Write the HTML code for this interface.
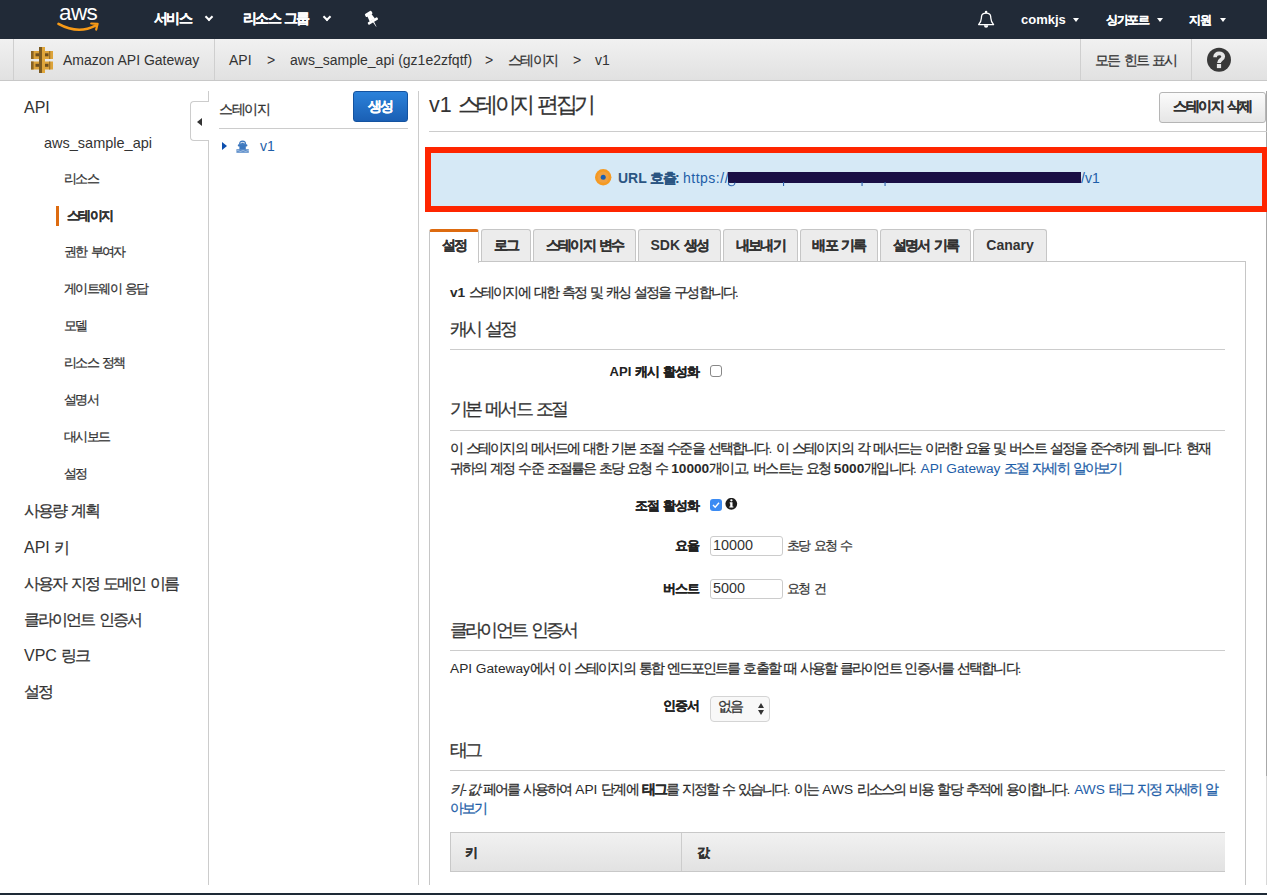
<!DOCTYPE html>
<html><head><meta charset="utf-8">
<style>
*{box-sizing:border-box;margin:0;padding:0}
html,body{width:1267px;height:895px;overflow:hidden;background:#fff;font-family:"Liberation Sans",sans-serif;color:#333}
.abs{position:absolute;white-space:nowrap}
#nav{position:absolute;left:0;top:0;width:1267px;height:39px;background:#212a37}
.tri{position:absolute;top:18px;width:0;height:0;border-left:3.5px solid transparent;border-right:3.5px solid transparent;border-top:4px solid #fff}
#nav .t{position:absolute;color:#fff;font-weight:bold;font-size:14px;top:10px}
.chev{position:absolute;width:6px;height:6px;border-right:2px solid #fff;border-bottom:2px solid #fff;transform:rotate(45deg)}
#crumb{position:absolute;left:0;top:39px;width:1267px;height:42px;background:linear-gradient(#f1f1f1,#e1e1e1);border-bottom:1px solid #c8c8c8}
#crumb .t{position:absolute;font-size:14px;color:#333;top:13px}
.vsep{position:absolute;top:0;width:1px;height:41px;background:#cfcfcf}
#side .t{position:absolute;color:#333;white-space:nowrap}
.lvl0{font-size:16px;left:24px}
.lvl1{font-size:14.5px;left:44px}
.lvl2{font-size:13px;left:64px}
.vline{position:absolute;width:1px;background:#cccccc}
.hline{position:absolute;height:1px;background:#cccccc}
.btn{position:absolute;border:1px solid #b5b5b5;border-radius:3px;background:linear-gradient(#fbfbfb,#e6e6e6);font-size:13px;font-weight:bold;color:#333;text-align:center}
.tab{position:absolute;top:229px;height:33px;border:1px solid #c6c6c6;border-bottom:none;border-radius:3px 3px 0 0;background:#ececec;font-size:14px;font-weight:bold;color:#333;text-align:center;line-height:30px}
.h{position:absolute;left:450px;font-size:17.5px;color:#333}
.h .k{letter-spacing:-0.16em}
.p{position:absolute;left:450px;font-size:13.7px;color:#2a2a2a;white-space:nowrap}
.lab{position:absolute;font-size:13px;font-weight:bold;color:#222;text-align:right;width:200px;left:499px;letter-spacing:0}
.inp{position:absolute;left:710px;width:73px;height:20px;border:1px solid #ccc;border-radius:3px;font-size:14.4px;padding-left:2px;line-height:16px;color:#333}
a,.lnk{color:#1e5ea8}
.k{letter-spacing:-0.12em;-webkit-text-stroke:0.25px currentColor}
.p .k{letter-spacing:-0.135em}
.ttl .k{letter-spacing:-0.165em}
.stg .k{letter-spacing:-0.09em}
.lab .k,.tab .k,.btn .k,#nav .k,b .k,.bk .k{-webkit-text-stroke:0.2px currentColor}
.lab .k{letter-spacing:-0.07em}
</style></head><body>

<div id="nav">
  <svg class="abs" style="left:56px;top:3.5px" width="46" height="32" viewBox="0 0 46 32">
    <text x="3" y="15.6" fill="#fff" font-family="Liberation Sans" font-size="22.5" letter-spacing="-0.6" transform="scale(1 1.0)">aws</text>
    <path d="M2.5 19.8 Q22 30.6 39.5 21.6" stroke="#f79a17" stroke-width="2.6" fill="none" stroke-linecap="round"/>
    <path d="M35.2 19.5 L41.6 19.8 L40.2 25.6" stroke="#f79a17" stroke-width="2.2" fill="none" stroke-linecap="round" stroke-linejoin="round"/>
  </svg>
  <div class="t" style="left:154px"><span class="k">서비스</span></div><div class="chev" style="left:206px;top:14px"></div>
  <div class="t" style="left:243px"><span class="k">리소스</span> <span class="k">그룹</span></div><div class="chev" style="left:324px;top:14px"></div>
  <svg class="abs" style="left:363px;top:10px" width="18" height="19" viewBox="0 0 18 19"><g transform="rotate(-31 9 9.5)" fill="#fff"><rect x="5.2" y="1.2" width="7.6" height="3.6" rx="1.2"/><path d="M6.6 4.4 L11.4 4.4 L12 10.2 L6 10.2 Z"/><rect x="3.4" y="9.8" width="11.2" height="2.8" rx="1"/><path d="M8.3 12.4 L9.7 12.4 L9.2 17.8 L8.8 17.8 Z"/></g></svg>
  <svg class="abs" style="left:977px;top:10px" width="18" height="20" viewBox="0 0 18 20"><circle cx="9.1" cy="2" r="1.3" fill="#fff"/><path d="M1.6 14.6 C3.6 12.4 4.3 10.4 4.4 8 L4.5 6.6 C4.7 4.2 6.6 3.2 9.1 3.2 C11.6 3.2 13.5 4.2 13.7 6.6 L13.8 8 C13.9 10.4 14.6 12.4 16.6 14.6 Z" stroke="#fff" stroke-width="1.3" fill="none" stroke-linejoin="round"/><path d="M6.9 15.2 L11.3 15.2 Q11.1 17.7 9.1 17.7 Q7.1 17.7 6.9 15.2 Z" fill="#fff"/></svg>
  <div class="t" style="left:1021px;font-size:13px;top:12px">comkjs</div><div class="tri" style="left:1073px"></div>
  <div class="t" style="left:1106px;font-size:12px;top:12px"><span class="k">싱가포르</span></div><div class="tri" style="left:1157px"></div>
  <div class="t" style="left:1189px;font-size:12px;top:12px"><span class="k">지원</span></div><div class="tri" style="left:1220px"></div>
</div>

<div id="crumb">
  <div class="vsep" style="left:13px"></div>
  <svg class="abs" style="left:30px;top:7px" width="24" height="28" viewBox="0 0 24 28">
    <!-- left brackets -->
    <g>
      <rect x="1" y="5" width="8" height="8" fill="#dca33a"/>
      <rect x="1" y="5" width="2.6" height="8" fill="#8a6424"/>
      <rect x="5.5" y="7.3" width="3.5" height="3" fill="#6e5020"/>
      <rect x="1" y="15.5" width="8" height="8" fill="#dca33a"/>
      <rect x="1" y="15.5" width="2.6" height="8" fill="#8a6424"/>
      <rect x="5.5" y="17.8" width="3.5" height="3" fill="#6e5020"/>
    </g>
    <g>
      <rect x="15" y="5" width="8" height="8" fill="#dca33a"/>
      <rect x="19.2" y="5" width="1" height="8" fill="#8a6424"/>
      <rect x="15" y="7.3" width="3.5" height="3" fill="#6e5020"/>
      <rect x="15" y="15.5" width="8" height="8" fill="#dca33a"/>
      <rect x="19.2" y="15.5" width="1" height="8" fill="#8a6424"/>
      <rect x="15" y="17.8" width="3.5" height="3" fill="#6e5020"/>
    </g>
    <rect x="9" y="1" width="3" height="26" fill="#7a5a22"/>
    <rect x="12" y="1" width="3" height="26" fill="#e0a63a"/>
  </svg>
  <div class="t" style="left:63px">Amazon API Gateway</div>
  <div class="vsep" style="left:214px"></div>
  <div class="t" style="left:229px">API</div>
  <div class="t" style="left:267px">&gt;</div>
  <div class="t" style="left:290px">aws_sample_api (gz1e2zfqtf)</div>
  <div class="t" style="left:485px">&gt;</div>
  <div class="t" style="left:508px"><span class="k">스테이지</span></div>
  <div class="t" style="left:573px">&gt;</div>
  <div class="t" style="left:595px">v1</div>
  <div class="vsep" style="left:1080px"></div>
  <div class="t" style="left:1095px"><span class="k">모든</span> <span class="k">힌트</span> <span class="k">표시</span></div>
  <div class="vsep" style="left:1191px"></div>
  <svg class="abs" style="left:1206px;top:8px" width="26" height="26" viewBox="0 0 26 26"><circle cx="13" cy="12.7" r="12" fill="#393939"/><path d="M9.1 10.2 C9.1 7.6 10.8 6.4 13.1 6.4 C15.6 6.4 17.2 7.8 17.2 9.6 C17.2 11.4 16 12.1 14.8 12.9 C13.6 13.7 13 14.2 13 16" stroke="#e6e6e6" stroke-width="3.8" fill="none"/><rect x="10.9" y="17" width="4.2" height="4.1" fill="#e6e6e6"/></svg>
</div>

<div class="vline" style="left:1266px;top:91px;height:685px;width:1px;background:#a8a8a8"></div>
<div id="side">
  <div class="t lvl0" style="top:99px">API</div>
  <div class="t lvl1" style="top:135px">aws_sample_api</div>
  <div class="t lvl2" style="top:170px"><span class="k">리소스</span></div>
  <div style="position:absolute;left:56px;top:206px;width:3px;height:20px;background:#dd6b10"></div>
  <div class="t lvl2" style="top:207px;left:67px;font-weight:bold"><span class="k">스테이지</span></div>
  <div class="t lvl2" style="top:243px"><span class="k">권한</span> <span class="k">부여자</span></div>
  <div class="t lvl2" style="top:280px"><span class="k">게이트웨이</span> <span class="k">응답</span></div>
  <div class="t lvl2" style="top:317px"><span class="k">모델</span></div>
  <div class="t lvl2" style="top:354px"><span class="k">리소스</span> <span class="k">정책</span></div>
  <div class="t lvl2" style="top:391px"><span class="k">설명서</span></div>
  <div class="t lvl2" style="top:428px"><span class="k">대시보드</span></div>
  <div class="t lvl2" style="top:465px"><span class="k">설정</span></div>
  <div class="t lvl0" style="top:501px"><span class="k">사용량</span> <span class="k">계획</span></div>
  <div class="t lvl0" style="top:538px">API <span class="k">키</span></div>
  <div class="t lvl0" style="top:574px"><span class="k">사용자</span> <span class="k">지정</span> <span class="k">도메인</span> <span class="k">이름</span></div>
  <div class="t lvl0" style="top:610px"><span class="k">클라이언트</span> <span class="k">인증서</span></div>
  <div class="t lvl0" style="top:646px">VPC <span class="k">링크</span></div>
  <div class="t lvl0" style="top:682px"><span class="k">설정</span></div>
</div>

<div class="vline" style="left:208px;top:91px;height:794px"></div>
<div style="position:absolute;left:190px;top:101px;width:19px;height:40px;border:1px solid #ccc;border-right:none;border-radius:4px 0 0 4px;background:#fff"></div>
<div style="position:absolute;left:197px;top:118px;width:0;height:0;border-top:4px solid transparent;border-bottom:4px solid transparent;border-right:5px solid #333"></div>

<div class="abs stg" style="left:219px;top:101px;font-size:14px;color:#333"><span class="k">스테이지</span></div>
<div class="btn" style="left:353px;top:91px;width:55px;height:31px;background:linear-gradient(#2c82da,#1a5fb4);border-color:#1453a0;color:#fff;line-height:28px;font-size:14px"><span class="k">생성</span></div>
<div class="hline" style="left:219px;top:128px;width:189px"></div>
<div style="position:absolute;left:222px;top:142px;width:0;height:0;border-top:4.5px solid transparent;border-bottom:4.5px solid transparent;border-left:5px solid #0d4fae"></div>
<svg class="abs" style="left:236px;top:140px" width="14" height="14" viewBox="0 0 14 14"><g fill="#3d78bf"><path d="M3 4.6 Q3 0.6 6.6 0.6 Q10.2 0.6 10.2 4.6 Z"/><rect x="1.8" y="4.3" width="9.6" height="2.2" rx="1"/><rect x="3.4" y="4.4" width="6.4" height="5.2"/><path d="M0.4 9.2 L12.8 9.2 L12.8 12.8 L0.4 12.8 Z" opacity="0.85"/></g><path d="M4.4 3 Q6.6 1.8 8.8 3" stroke="#fff" stroke-width="0.9" fill="none"/><path d="M0.6 11 Q2 10 3.2 11 T5.8 11 T8.4 11 T11 11 T13 11" stroke="#fff" stroke-width="0.6" fill="none" opacity="0.7"/></svg>
<div class="abs lnk" style="left:260px;top:138px;font-size:14px">v1</div>

<div class="vline" style="left:418px;top:91px;height:794px"></div>

<div class="abs ttl" style="left:429px;top:90px;font-size:21.5px;color:#333">v1 <span class="k">스테이지</span> <span class="k">편집기</span></div>
<div class="btn" style="left:1159px;top:92px;width:107px;height:31px;line-height:28px;font-size:13.5px"><span class="k">스테이지</span> <span class="k">삭제</span></div>
<div class="hline" style="left:429px;top:131px;width:838px"></div>

<div style="position:absolute;left:425px;top:147px;width:843px;height:65px;border:6px solid #fe2500;background:#d6e9f6"></div>
<svg class="abs" style="left:594px;top:168px" width="18" height="18" viewBox="0 0 18 18"><circle cx="9.2" cy="9.2" r="8.2" fill="#f59a22"/><circle cx="9.2" cy="9.2" r="5.6" fill="#f0a040"/><circle cx="9.2" cy="9.2" r="2.5" fill="#1d5fb0"/></svg>
<div class="abs" style="left:618px;top:170px;font-size:14px;font-weight:bold;color:#2b5582">URL <span class="k">호출</span>:</div>
<div class="abs lnk" style="left:683px;top:170px;font-size:14px;letter-spacing:0.5px">https://</div>
<div style="position:absolute;left:728px;top:172px;width:353px;height:11px;background:#1a0f45"></div><svg class="abs" style="left:726px;top:182px" width="170" height="6" viewBox="0 0 170 6"><path d="M2.5 0.5 Q2 3.8 5.5 3.8 Q8.5 3.8 9 0.5" stroke="#2e64b0" stroke-width="1.1" fill="none"/><rect x="57" y="0" width="1.1" height="4" fill="#2e64b0"/><rect x="135.5" y="0" width="1.1" height="4" fill="#2e64b0"/><rect x="158.5" y="0" width="1.1" height="4" fill="#2e64b0"/></svg>
<div class="abs lnk" style="left:1081px;top:170px;font-size:14px">/v1</div>

<div class="tab" style="left:429px;width:50px;background:#fff;border-top:3px solid #dd6b10;height:34px;line-height:27px"><span class="k">설정</span></div>
<div class="tab" style="left:481px;width:50px"><span class="k">로그</span></div>
<div class="tab" style="left:533px;width:103px"><span class="k">스테이지</span> <span class="k">변수</span></div>
<div class="tab" style="left:638px;width:83px">SDK <span class="k">생성</span></div>
<div class="tab" style="left:723px;width:75px"><span class="k">내보내기</span></div>
<div class="tab" style="left:800px;width:78px"><span class="k">배포</span> <span class="k">기록</span></div>
<div class="tab" style="left:880px;width:91px"><span class="k">설명서</span> <span class="k">기록</span></div>
<div class="tab" style="left:973px;width:74px">Canary</div>
<div class="hline" style="left:478px;top:261px;width:768px;background:#c6c6c6"></div>
<div class="vline" style="left:429px;top:261px;height:624px;background:#c6c6c6"></div>
<div class="vline" style="left:1245px;top:261px;height:624px;background:#c6c6c6"></div>

<div class="p" style="top:284px"><b>v1</b> <span class="k">스테이지에</span> <span class="k">대한</span> <span class="k">측정</span> <span class="k">및</span> <span class="k">캐싱</span> <span class="k">설정을</span> <span class="k">구성합니다</span>.</div>
<div class="h" style="top:317px"><span class="k">캐시</span> <span class="k">설정</span></div>
<div class="hline" style="left:450px;top:349px;width:775px"></div>
<div class="lab" style="top:363px">API <span class="k">캐시</span> <span class="k">활성화</span></div>
<div style="position:absolute;left:710px;top:365px;width:12px;height:12px;border:1px solid #888;border-radius:3px;background:#fff"></div>

<div class="h" style="top:397px"><span class="k">기본</span> <span class="k">메서드</span> <span class="k">조절</span></div>
<div class="hline" style="left:450px;top:430px;width:775px"></div>
<div class="p" style="top:440px"><span class="k">이</span> <span class="k">스테이지의</span> <span class="k">메서드에</span> <span class="k">대한</span> <span class="k">기본</span> <span class="k">조절</span> <span class="k">수준을</span> <span class="k">선택합니다</span>. <span class="k">이</span> <span class="k">스테이지의</span> <span class="k">각</span> <span class="k">메서드는</span> <span class="k">이러한</span> <span class="k">요율</span> <span class="k">및</span> <span class="k">버스트</span> <span class="k">설정을</span> <span class="k">준수하게</span> <span class="k">됩니다</span>. <span class="k">현재</span></div>
<div class="p" style="top:460px"><span class="k">귀하의</span> <span class="k">계정</span> <span class="k">수준</span> <span class="k">조절률은</span> <span class="k">초당</span> <span class="k">요청</span> <span class="k">수</span> <b>10000</b><span class="k">개이고</span>, <span class="k">버스트는</span> <span class="k">요청</span> <b>5000</b><span class="k">개입니다</span>. <span class="lnk">API Gateway <span class="k">조절</span> <span class="k">자세히</span> <span class="k">알아보기</span></span></div>
<div class="lab" style="top:497px"><span class="k">조절</span> <span class="k">활성화</span></div>
<div style="position:absolute;left:710px;top:499px;width:12px;height:12px;border-radius:3px;background:#3b8bf3"></div>
<svg class="abs" style="left:711px;top:500px" width="10" height="10" viewBox="0 0 10 10"><path d="M2 5 L4.2 7.2 L8 2.8" stroke="#fff" stroke-width="1.4" fill="none"/></svg>
<svg class="abs" style="left:725px;top:498px" width="13" height="13" viewBox="0 0 13 13"><circle cx="6.3" cy="5.8" r="5.9" fill="#1c1c1c"/><circle cx="6.4" cy="2.3" r="1.15" fill="#fff"/><path d="M4.7 4.2 L7.5 4.2 L7.5 8.4 L8.4 8.4 L8.4 9.6 L4.3 9.6 L4.3 8.4 L5.2 8.4 L5.2 5.4 L4.7 5.4 Z" fill="#fff"/></svg>
<div class="lab" style="top:537px"><span class="k">요율</span></div>
<div class="inp" style="top:536px">10000</div>
<div class="abs" style="left:787px;top:537px;font-size:13px"><span class="k">초당</span> <span class="k">요청</span> <span class="k">수</span></div>
<div class="lab" style="top:580px"><span class="k">버스트</span></div>
<div class="inp" style="top:579px;height:20px">5000</div>
<div class="abs" style="left:787px;top:580px;font-size:13px"><span class="k">요청</span> <span class="k">건</span></div>

<div class="h" style="top:618px"><span class="k">클라이언트</span> <span class="k">인증서</span></div>
<div class="hline" style="left:450px;top:650px;width:775px"></div>
<div class="p" style="top:660px">API Gateway<span class="k">에서</span> <span class="k">이</span> <span class="k">스테이지의</span> <span class="k">통합</span> <span class="k">엔드포인트를</span> <span class="k">호출할</span> <span class="k">때</span> <span class="k">사용할</span> <span class="k">클라이언트</span> <span class="k">인증서를</span> <span class="k">선택합니다</span>.</div>
<div class="lab" style="top:697px"><span class="k">인증서</span></div>
<div style="position:absolute;left:710px;top:696px;width:60px;height:26px;border:1px solid #d4d4d4;border-radius:4px;background:#f8f8f8"></div>
<div class="abs" style="left:718px;top:698px;font-size:14px"><span class="k">없음</span></div>
<div style="position:absolute;left:758px;top:702.5px;width:0;height:0;border-left:3.5px solid transparent;border-right:3.5px solid transparent;border-bottom:5px solid #333"></div>
<div style="position:absolute;left:758px;top:710px;width:0;height:0;border-left:3.5px solid transparent;border-right:3.5px solid transparent;border-top:5px solid #333"></div>

<div class="h" style="top:738px"><span class="k">태그</span></div>
<div class="hline" style="left:450px;top:770px;width:775px"></div>
<div class="p" style="top:781px"><i><span class="k">키</span>-<span class="k">값</span></i> <span class="k">페어를</span> <span class="k">사용하여</span> API <span class="k">단계에</span> <b><span class="k">태그</span></b><span class="k">를</span> <span class="k">지정할</span> <span class="k">수</span> <span class="k">있습니다</span>. <span class="k">이는</span> AWS <span class="k">리소스의</span> <span class="k">비용</span> <span class="k">할당</span> <span class="k">추적에</span> <span class="k">용이합니다</span>. <span class="lnk">AWS <span class="k">태그</span> <span class="k">지정</span> <span class="k">자세히</span> <span class="k">알</span></span></div>
<div class="p lnk" style="top:800px"><span class="k">아보기</span></div>
<div style="position:absolute;left:450px;top:832px;width:775px;height:40px;border:1px solid #c8c8c8;border-right:none;background:linear-gradient(#f1f1f1,#e2e2e2)"></div>
<div class="vline" style="left:681px;top:833px;height:38px"></div>
<div class="abs" style="left:465px;top:844px;font-size:13px;font-weight:bold"><span class="k">키</span></div>
<div class="abs" style="left:697px;top:844px;font-size:13px;font-weight:bold"><span class="k">값</span></div>

<div style="position:absolute;left:0;top:893px;width:1267px;height:2px;background:#1e2a36"></div>
<div class="vline" style="left:1266px;top:776px;height:109px;background:#d8d8d8"></div>
</body></html>
